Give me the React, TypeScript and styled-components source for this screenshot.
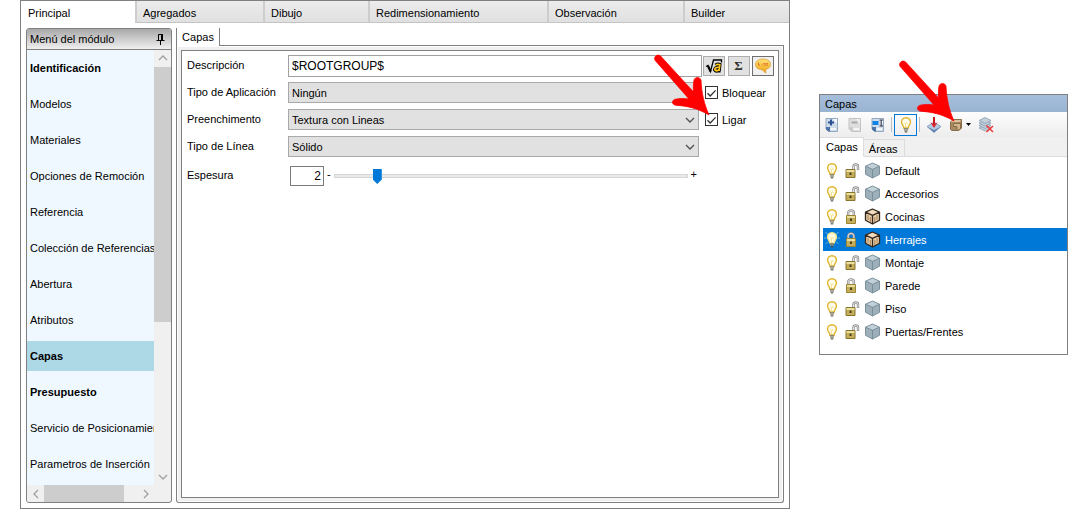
import React, { useState } from "react";
import styled, { createGlobalStyle, css } from "styled-components";

const GlobalStyle = createGlobalStyle`
  * { box-sizing: border-box; }
  body {
    margin: 0;
    background: #fff;
    color: #000;
    font: 11px/14px "Liberation Sans", Arial, sans-serif;
  }
  button, input, select { font: inherit; color: inherit; margin: 0; }
  button { padding: 0; border: 0; background: none; }
  svg { display: block; }
`;

const LINE = "#808080";

const Page = styled.div`
  display: flex;
  align-items: flex-start;
  gap: 29px;
  padding: 0 20px;
`;

/* ---------- module window ---------- */

const ModuleWindow = styled.main`
  flex: 1;
  min-width: 0;
  border: 1px solid ${LINE};
`;

const TopTabs = styled.div`
  display: flex;
`;

const TopTab = styled.button<{ $grow: number; $active?: boolean }>`
  flex: ${(p) => p.$grow} 0 0;
  height: 22px;
  padding: 2px 7px 0;
  text-align: left;
  border-bottom: 1px solid #c4c4c4;
  background: linear-gradient(#ececec, #e0e0e0);
  & + & { border-left: 2px solid #cdcdcd; padding: 2px 6px 0; }
  ${(p) => p.$active && css`
    background: #fff;
    border-bottom-color: #fff;
  `}
`;

const WindowBody = styled.div`
  display: flex;
  align-items: stretch;
  gap: 4px;
  padding: 5px;
`;

const SideMenu = styled.nav`
  display: flex;
  flex-direction: column;
  width: 146px;
  flex: none;
  border: 1px solid ${LINE};
  border-radius: 3px;
  background: #f0f0f0;
  overflow: hidden;
`;

const SideHeader = styled.div`
  display: flex;
  align-items: center;
  justify-content: space-between;
  height: 21px;
  padding: 0 5px 0 3px;
  border-bottom: 1px solid ${LINE};
  background: linear-gradient(#a8a8a8, #f0f0f0);
`;

const SideContent = styled.div`
  display: grid;
  grid-template-columns: minmax(0, 1fr) 17px;
  grid-template-rows: auto 17px;
`;

const MenuList = styled.ul`
  margin: 0;
  padding: 0;
  list-style: none;
  overflow: hidden;
  background: #f0f8ff;
`;

const MenuLink = styled.a<{ $bold?: boolean; $active?: boolean }>`
  display: block;
  margin: 3px 0 6px;
  padding: 8px 3px;
  color: #000;
  text-decoration: none;
  white-space: nowrap;
  font-weight: ${(p) => (p.$bold ? 700 : 400)};
  background: ${(p) => (p.$active ? "#add8e6" : "transparent")};
`;

const MenuItem = styled.li`
  display: flow-root;
  & + & > a { margin-top: 0; }
`;

const ScrollBar = styled.div<{ $horizontal?: boolean }>`
  display: flex;
  flex-direction: ${(p) => (p.$horizontal ? "row" : "column")};
  background: #f0f0f0;
`;

const ScrollButton = styled.button`
  display: grid;
  place-items: center;
  flex: none;
  width: 17px;
  height: 17px;
`;

const ScrollThumb = styled.div<{ $grow: number }>`
  flex: ${(p) => p.$grow} 0 0;
  background: #cdcdcd;
`;

const ScrollRest = styled.div<{ $grow: number }>`
  flex: ${(p) => p.$grow} 0 0;
`;

const Content = styled.section`
  display: flex;
  flex-direction: column;
  flex: 1;
  min-width: 0;
`;

const PageTabs = styled.div`
  display: flex;
  height: 18px;
`;

const PageTab = styled.button`
  width: 44px;
  border-left: 1px solid ${LINE};
  border-right: 1px solid ${LINE};
  background: #fff;
`;

const PageTabLine = styled.div`
  flex: 1;
  border-bottom: 1px solid ${LINE};
`;

const Frame = styled.div`
  flex: 1;
  display: flex;
  padding: 1px;
  border: 1px solid ${LINE};
  border-top: 0;
  border-radius: 0 0 3px 3px;
`;

const Panel = styled.form`
  flex: 1;
  min-width: 0;
  padding: 1px 4px 0 5px;
  background: #fff;
  border: 1px solid ${LINE};
  outline: 3px solid #f0f0f0;
  margin: 3px;
`;

const Field = styled.div`
  display: grid;
  grid-template-columns: 101px minmax(0, 1fr) 72px;
  align-items: center;
  height: 27px;
`;

const SliderField = styled(Field)`
  height: 32px;
`;

const FieldLabel = styled.label`
  padding-bottom: 2px;
  white-space: nowrap;
`;

const TextBox = styled.input`
  width: 100%;
  height: 22px;
  padding: 0 3px;
  border: 1px solid #a0a0a0;
  background: #fff;
  font-size: 12px;
`;

const SelectWrap = styled.div`
  position: relative;
  margin-right: 3px;
  svg { position: absolute; right: 4px; top: 6px; pointer-events: none; }
`;

const Select = styled.select`
  display: block;
  appearance: none;
  width: 100%;
  height: 21px;
  padding: 0 20px 0 3px;
  border: 1px solid #a9a9a9;
  border-radius: 0;
  background: #e1e1e1;
`;

const Tools = styled.div`
  display: flex;
  justify-content: space-between;
  padding-left: 1px;
`;

const ToolButton = styled.button<{ $light?: boolean }>`
  display: grid;
  place-items: center;
  width: 22px;
  height: 20px;
  border: 1px solid ${(p) => (p.$light ? "#6e6e6e" : "#adadad")};
  background: ${(p) => (p.$light ? "#f0f0f0" : "#e1e1e1")};
  color: #333;
  font: bold 13px/18px "Liberation Serif", serif;
`;

const Check = styled.label`
  position: relative;
  display: flex;
  align-items: center;
  gap: 4px;
  padding-left: 3px;
`;

const CheckInput = styled.input`
  appearance: none;
  flex: none;
  width: 13px;
  height: 13px;
  border: 1px solid #333;
  background: #fff;
  & + svg { position: absolute; left: 4px; top: 2px; visibility: hidden; pointer-events: none; }
  &:checked + svg { visibility: visible; }
`;

const SliderRow = styled.div`
  display: flex;
  align-items: center;
  gap: 3px;
  padding: 0 5px 0 2px;
`;

const Sign = styled.span`
  padding-bottom: 4px;
`;

const NumberBox = styled.input`
  flex: none;
  width: 34px;
  height: 20px;
  padding: 0 2px;
  border: 1px solid #7a7a7a;
  text-align: right;
  font-size: 12px;
`;

const Range = styled.input`
  appearance: none;
  flex: 1;
  min-width: 0;
  height: 16px;
  margin: 0;
  background: transparent;
  &::-webkit-slider-runnable-track {
    height: 4px;
    border: 1px solid #d6d6d6;
    background: #e7eaea;
  }
  &::-webkit-slider-thumb {
    appearance: none;
    width: 9px;
    height: 15px;
    margin-top: -6px;
    background: #0078d7;
    clip-path: polygon(0 0, 100% 0, 100% 70%, 50% 100%, 0 70%);
  }
`;

/* ---------- layers window ---------- */

const LayersWindow = styled.aside`
  width: 249px;
  flex: none;
  margin-top: 94px;
  padding-bottom: 11px;
  border: 1px solid ${LINE};
  background: #fff;
`;

const Caption = styled.h2`
  margin: 0;
  padding: 2px 5px 1px;
  font: inherit;
  background: linear-gradient(#a6bedb, #99b4d1);
`;

const ToolStrip = styled.div`
  display: flex;
  align-items: center;
  height: 25px;
  background: linear-gradient(#fdfdfd, #ededed);
`;

const StripButton = styled.button<{ $pressed?: boolean; $wide?: boolean }>`
  position: relative;
  display: flex;
  align-items: center;
  justify-content: center;
  gap: 3px;
  width: ${(p) => (p.$wide ? 29 : 23)}px;
  height: 22px;
  border: 1px solid ${(p) => (p.$pressed ? "#0078d7" : "transparent")};
`;

const Divider = styled.span`
  width: 1px;
  height: 15px;
  margin: 0 2px;
  background: #bdbdbd;
`;

const LayerTabs = styled.div`
  display: flex;
  align-items: flex-end;
  height: 20px;
  background: #f0f0f0;
  box-shadow: inset 0 -1px #dcdcdc;
`;

const LayerTab = styled.button<{ $active?: boolean }>`
  height: ${(p) => (p.$active ? 20 : 18)}px;
  padding: ${(p) => (p.$active ? "0 5px 1px 6px" : "1px 6px 0 5px")};
  border: 1px solid #dcdcdc;
  border-left: 0;
  background: ${(p) => (p.$active ? "#fff" : "#f0f0f0")};
  border-bottom-color: ${(p) => (p.$active ? "#fff" : "#dcdcdc")};
`;

const LayerList = styled.ul`
  margin: 0;
  padding: 2px 0 0 3px;
  list-style: none;
`;

const LayerRow = styled.li<{ $selected?: boolean }>`
  display: flex;
  align-items: center;
  gap: 4px;
  height: 23px;
  padding-left: 1px;
  color: ${(p) => (p.$selected ? "#fff" : "#000")};
  background: ${(p) => (p.$selected ? "#0078d7" : "#fff")};
`;

const PointerMark = styled.svg<{ $left: number; $top: number }>`
  position: absolute;
  left: ${(p) => p.$left}px;
  top: ${(p) => p.$top}px;
  z-index: 2;
  overflow: visible;
  pointer-events: none;
`;

/* ---------- drawings ---------- */

const RedArrow = ({ left, top }: { left: number; top: number }) => (
  <PointerMark $left={left} $top={top} width="70" height="72" viewBox="0 0 70 72" aria-hidden="true">
    <path
      d="M5.2 10.5C3 7 7.4 3.400 10.6 6L43.500 42C43.300 38 43.200 34.500 44 30.200C45 26.400 50.200 26.700 51 30.200C51.500 43 54.300 54.500 59 65C48.500 58.600 37.500 56 25.600 55.200C21.400 54.300 21.600 50 25.400 49.200C30 48.200 34.500 48.200 39 49Z"
      fill="#f00"
      stroke="#f00"
      strokeWidth=".8"
      strokeLinejoin="round"
    />
  </PointerMark>
);

const chevrons = {
  up: "M1 6L5 2L9 6",
  down: "M1 3L5 7L9 3",
  left: "M7 1L3 5L7 9",
  right: "M3 1L7 5L3 9",
};

const Chevron = ({ to, color = "#a0a0a0" }: { to: keyof typeof chevrons; color?: string }) => (
  <svg width="10" height="10" viewBox="0 0 10 10" aria-hidden="true">
    <path d={chevrons[to]} fill="none" stroke={color} strokeWidth="1.3" />
  </svg>
);

const Tick = () => (
  <svg width="11" height="11" viewBox="0 0 11 11" aria-hidden="true">
    <path d="M1.5 5.2L4.2 8L9.6 2.4" fill="none" stroke="#333" strokeWidth="1.3" />
  </svg>
);

const Pin = () => (
  <svg width="11" height="12" viewBox="0 0 11 12" aria-hidden="true">
    <path d="M3.5 7.5V1.5H7.5V7.5M1.5 7.5H9.5M5.5 8V12" fill="none" stroke="#000" />
    <path d="M6 1H8V7H6Z" />
  </svg>
);

const RootIcon = () => (
  <svg width="18" height="16" viewBox="0 0 18 16" aria-hidden="true">
    <path d="M1 8.5L3 7.5L5.5 13.5L8.5 2H16.5V4.5" fill="none" stroke="#000" strokeWidth="1.3" />
    <path d="M3 8L5.6 13.5" stroke="#000" strokeWidth="2.2" />
    <path d="M10.5 7.2Q12.5 5.5 15 6.5L14.3 13H15.5M14.2 9Q9.5 8.8 9.5 12Q11.5 14.8 14 11.5" fill="none" stroke="#000" strokeWidth="3" />
    <path d="M10.8 7.2Q12.5 5.8 14.8 6.8L14 13M14.2 9.3Q9.9 9 9.8 11.8Q11.5 14 14 11.5" fill="none" stroke="#ffc61a" strokeWidth="1.7" />
  </svg>
);

const Balloon = () => (
  <svg width="18" height="16" viewBox="0 0 18 16" aria-hidden="true">
    <defs>
      <linearGradient id="balloon" x1="0" y1="0" x2="0" y2="1">
        <stop offset="0" stopColor="#ffe27a" />
        <stop offset="1" stopColor="#f0a010" />
      </linearGradient>
    </defs>
    <path d="M9 1C4 1 1.5 3.3 1.5 6.5C1.5 9.8 4 11.5 8 11.7C9 12.5 10 14 12 15C11.5 13.5 11.5 12.5 12 11.3C15 10.5 16.5 8.8 16.5 6.5C16.5 3.3 14 1 9 1Z" fill="url(#balloon)" stroke="#d79a2b" strokeWidth=".7" />
    <path d="M4.5 4.500V7H6M7.5 7H8.500M9.500 5.500H11.500M12.300 5.500H14M9.500 7H14" stroke="#d8601c" strokeWidth=".8" fill="none" />
  </svg>
);

const Bulb = ({ glow }: { glow?: boolean }) => (
  <svg width="16" height="16" viewBox="0 0 16 16" aria-hidden="true">
    {glow && (
      <path d="M0 6H2.500M13.500 6H16M1.500 0L4 2.500M14.500 0L12 2.500M1.500 12L4 9.500M14.500 12L12 9.500" stroke="#6fb8d8" strokeWidth="1" />
    )}
    <path d="M8 .8C5.2 .8 3.6 2.8 3.6 5.2C3.6 7.6 5.7 8.6 5.9 11H10.1C10.3 8.6 12.4 7.6 12.4 5.2C12.4 2.8 10.8 .8 8 .8Z" fill={glow ? "#fffbe0" : "#fffdf0"} stroke={glow ? "#f5e68b" : "#dfb52c"} strokeWidth="1.4" />
    <path d="M6.5 5.500L7.5 7L8.500 5.500L9.500 7M7.500 7V10.500" fill="none" stroke="#f3dc79" strokeWidth=".8" />
    <path d="M5.800 11.600H10.200M6 13.200H10" stroke="#8e8a76" strokeWidth="1.2" />
    <path d="M6.700 14.300H9.300V15.400H6.700Z" fill="#4a4a42" />
  </svg>
);

const Padlock = ({ open }: { open?: boolean }) => (
  <svg width="16" height="16" viewBox="0 0 16 16" aria-hidden="true">
    {open ? (
      <>
        <path d="M9.500 6.500V3.500Q9.500 1.500 11.700 1.500Q14 1.500 14 3.500V7" fill="none" stroke="#8b8b8b" strokeWidth="2.4" />
        <path d="M9.500 6.500V3.500Q9.500 1.500 11.700 1.500Q14 1.500 14 3.500V6.500" fill="none" stroke="#eee" strokeWidth=".9" />
        <path d="M2 6.500H11V14.500H2Z" fill="#c4ae5c" stroke="#87742e" />
        <path d="M2.500 7H10.500V9H2.500Z" fill="#ebdf9e" />
        <path d="M5.500 9.500H7.500V12H5.500Z" fill="#4a401c" />
      </>
    ) : (
      <>
        <path d="M4.200 7V3.800Q4.200 1.500 7 1.500Q9.800 1.500 9.800 3.800V7" fill="none" stroke="#8b8b8b" strokeWidth="2.4" />
        <path d="M4.200 7V3.800Q4.200 1.500 7 1.500Q9.800 1.500 9.800 3.800V7" fill="none" stroke="#eee" strokeWidth=".9" />
        <path d="M2.500 6.500H11.500V14.500H2.500Z" fill="#c4ae5c" stroke="#9b8534" />
        <path d="M3 7H11V9H3Z" fill="#ebdf9e" />
        <path d="M6 9.500H8V12H6Z" fill="#4a401c" />
      </>
    )}
  </svg>
);

const Cube = ({ wood }: { wood?: boolean }) => (
  <svg width="17" height="17" viewBox="0 0 17 17" aria-hidden="true">
    <path d="M8.5 1L15.5 4.2V12.3L8.5 16L1.5 12.3V4.2Z" fill={wood ? "#ecd0a9" : "#9db0ba"} />
    <path d="M8.5 1L15.5 4.2L8.5 7.3L1.5 4.2Z" fill={wood ? "#f2dcc0" : "#c2d0d7"} />
    {wood && <path d="M4 7V12M6.300 9V14M10.800 9V14M13 7V12" stroke="#8c6844" strokeWidth=".8" />}
    <path d="M8.5 1L15.5 4.2V12.3L8.5 16L1.5 12.3V4.2ZM1.5 4.2L8.5 7.3L15.5 4.2M8.5 7.3V16" fill="none" stroke={wood ? "#33261c" : "#748a96"} strokeWidth={wood ? 1.3 : 0.9} strokeLinejoin="round" />
  </svg>
);

const Sheet = ({ kind }: { kind: "add" | "remove" | "rename" }) => {
  const off = kind === "remove";
  return (
    <svg width="14" height="14" viewBox="0 0 14 14" aria-hidden="true">
      <path d="M1 .5H12.500V13.500H3.500L1 11Z" fill={off ? "#dedede" : "#cfddeb"} stroke={off ? "#c3c3c3" : "#95a9c2"} />
      <path d="M8 1H12V6Z" fill={off ? "#efefef" : "#f4f9ff"} />
      <path d="M1 9H5V13.500H3.500L1 11.500Z" fill={off ? "#ccc" : "#4e74a8"} />
      <path d="M5.500 11H11" stroke="#fff" strokeWidth="1.5" />
      {kind === "add" && <path d="M3 4.500H9M6 1.500V7.500" stroke="#2c5292" strokeWidth="2" />}
      {kind === "remove" && <path d="M3.500 4.500H9.500" stroke="#a9a9a9" strokeWidth="2" />}
      {kind === "rename" && (
        <>
          <path d="M1.500 3H7.500V7H1.500Z" fill="#1283e6" />
          <path d="M8.500 2H12M8.500 8H12M10.200 2V8" stroke="#334" fill="none" />
        </>
      )}
    </svg>
  );
};

const InsertLayer = () => (
  <svg width="16" height="16" viewBox="0 0 16 16" aria-hidden="true">
    <path d="M8 5L15 9.5L8 15.5L1 9.5Z" fill="#b4c9e0" stroke="#7d97b8" strokeWidth=".7" />
    <path d="M1 9.5L8 13L15 9.5L8 15.5Z" fill="#6384ad" />
    <path d="M8 0V7" stroke="#c8141c" strokeWidth="2" />
    <path d="M4.5 5.500L8 7L11.500 5.500L8 11Z" fill="#d8262e" />
  </svg>
);

const Box = () => (
  <svg width="14" height="14" viewBox="0 0 14 14" aria-hidden="true">
    <path d="M1.500 4L4 1.500H12.500V10L10 12.500H3L1.500 11.500Z" fill="#a98a62" stroke="#8a6f4a" />
    <path d="M2 4L4.300 2H12L10.500 4Z" fill="#dcc4a0" />
    <path d="M4.500 5.500H11.500V10.500L9 12.500L8 12V8.500H4.500Z" fill="#d3b78f" stroke="#7b5f3c" strokeWidth=".8" />
  </svg>
);

const Caret = () => (
  <svg width="5" height="3" viewBox="0 0 5 3" aria-hidden="true">
    <path d="M0 0H5L2.5 3Z" />
  </svg>
);

const RemoveLayers = () => (
  <svg width="16" height="16" viewBox="0 0 16 16" aria-hidden="true">
    {[10, 7.5, 5, 2.5].map((y) => (
      <path key={y} d={`M7 ${y - 2}L13 ${y + 1}L7 ${y + 4}L1 ${y + 1}Z`} fill="#c3d0dc" stroke="#7c93a8" strokeWidth=".7" />
    ))}
    <path d="M8.500 8.500L15 15M15 9L8.500 15" stroke="#f03a3a" strokeWidth="1.6" />
  </svg>
);

/* ---------- data ---------- */

const topTabs = [
  { name: "Principal", grow: 100 },
  { name: "Agregados", grow: 114 },
  { name: "Dibujo", grow: 91 },
  { name: "Redimensionamiento", grow: 165 },
  { name: "Observación", grow: 122 },
  { name: "Builder", grow: 92 },
];

const menu = [
  { name: "Identificación", bold: true },
  { name: "Modelos" },
  { name: "Materiales" },
  { name: "Opciones de Remoción" },
  { name: "Referencia" },
  { name: "Colección de Referencias" },
  { name: "Abertura" },
  { name: "Atributos" },
  { name: "Capas", bold: true, active: true },
  { name: "Presupuesto", bold: true },
  { name: "Servicio de Posicionamiento" },
  { name: "Parametros de Inserción" },
];

const layers = [
  { name: "Default", locked: false, wood: false },
  { name: "Accesorios", locked: false, wood: false },
  { name: "Cocinas", locked: true, wood: true },
  { name: "Herrajes", locked: true, wood: true },
  { name: "Montaje", locked: false, wood: false },
  { name: "Parede", locked: true, wood: false },
  { name: "Piso", locked: false, wood: false },
  { name: "Puertas/Frentes", locked: false, wood: false },
];

const Dropdown = ({ id, value }: { id: string; value: string }) => (
  <SelectWrap>
    <Select id={id} defaultValue={value}>
      <option>{value}</option>
    </Select>
    <Chevron to="down" color="#505050" />
  </SelectWrap>
);

export default function App() {
  const [thickness, setThickness] = useState(2);
  const [selected, setSelected] = useState("Herrajes");
  const changeThickness = (e: React.ChangeEvent<HTMLInputElement>) => setThickness(Number(e.target.value) || 1);

  return (
    <Page>
      <GlobalStyle />
      <ModuleWindow>
        <TopTabs role="tablist">
          {topTabs.map((t, i) => (
            <TopTab key={t.name} type="button" role="tab" aria-selected={i === 0} $grow={t.grow} $active={i === 0}>
              {t.name}
            </TopTab>
          ))}
        </TopTabs>
        <WindowBody>
          <SideMenu>
            <SideHeader>
              Menú del módulo
              <button type="button" aria-label="Fijar"><Pin /></button>
            </SideHeader>
            <SideContent>
              <MenuList>
                {menu.map((m) => (
                  <MenuItem key={m.name}>
                    <MenuLink href="#" $bold={m.bold} $active={m.active}>{m.name}</MenuLink>
                  </MenuItem>
                ))}
              </MenuList>
              <ScrollBar>
                <ScrollButton type="button" aria-label="Subir"><Chevron to="up" /></ScrollButton>
                <ScrollThumb $grow={255} />
                <ScrollRest $grow={146} />
                <ScrollButton type="button" aria-label="Bajar"><Chevron to="down" /></ScrollButton>
              </ScrollBar>
              <ScrollBar $horizontal>
                <ScrollButton type="button" aria-label="Izquierda"><Chevron to="left" /></ScrollButton>
                <ScrollThumb $grow={80} />
                <ScrollRest $grow={13} />
                <ScrollButton type="button" aria-label="Derecha"><Chevron to="right" /></ScrollButton>
              </ScrollBar>
            </SideContent>
          </SideMenu>
          <Content>
            <PageTabs role="tablist">
              <PageTab type="button" role="tab" aria-selected>Capas</PageTab>
              <PageTabLine />
            </PageTabs>
            <Frame>
              <Panel onSubmit={(e) => e.preventDefault()}>
                <Field>
                  <FieldLabel htmlFor="description">Descripción</FieldLabel>
                  <TextBox id="description" defaultValue="$ROOTGROUP$" />
                  <Tools>
                    <ToolButton type="button" aria-label="Fórmula"><RootIcon /></ToolButton>
                    <ToolButton type="button">Σ</ToolButton>
                    <ToolButton type="button" $light aria-label="Comentario"><Balloon /></ToolButton>
                  </Tools>
                </Field>
                <Field>
                  <FieldLabel htmlFor="application">Tipo de Aplicación</FieldLabel>
                  <Dropdown id="application" value="Ningún" />
                  <Check>
                    <CheckInput type="checkbox" defaultChecked />
                    <Tick />
                    Bloquear
                  </Check>
                </Field>
                <Field>
                  <FieldLabel htmlFor="fill">Preenchimento</FieldLabel>
                  <Dropdown id="fill" value="Textura con Lineas" />
                  <Check>
                    <CheckInput type="checkbox" defaultChecked />
                    <Tick />
                    Ligar
                    <RedArrow left={-52} top={-63} />
                  </Check>
                </Field>
                <Field>
                  <FieldLabel htmlFor="line">Tipo de Línea</FieldLabel>
                  <Dropdown id="line" value="Sólido" />
                </Field>
                <SliderField>
                  <FieldLabel htmlFor="thickness">Espesura</FieldLabel>
                  <SliderRow>
                    <NumberBox id="thickness" value={thickness} onChange={changeThickness} />
                    <Sign>-</Sign>
                    <Range type="range" aria-label="Espesura" min={1} max={10} value={thickness} onChange={changeThickness} />
                    <Sign>+</Sign>
                  </SliderRow>
                </SliderField>
              </Panel>
            </Frame>
          </Content>
        </WindowBody>
      </ModuleWindow>

      <LayersWindow>
        <Caption>Capas</Caption>
        <ToolStrip role="toolbar">
          <StripButton type="button" aria-label="Agregar capa"><Sheet kind="add" /></StripButton>
          <StripButton type="button" aria-label="Quitar capa" disabled><Sheet kind="remove" /></StripButton>
          <StripButton type="button" aria-label="Renombrar capa"><Sheet kind="rename" /></StripButton>
          <Divider />
          <StripButton type="button" aria-label="Visibilidad" $pressed><Bulb /></StripButton>
          <Divider />
          <StripButton type="button" aria-label="Mover a capa"><InsertLayer /></StripButton>
          <StripButton type="button" aria-label="Aspecto" $wide>
            <Box />
            <Caret />
            <RedArrow left={-51} top={-59} />
          </StripButton>
          <StripButton type="button" aria-label="Limpiar capas"><RemoveLayers /></StripButton>
        </ToolStrip>
        <LayerTabs role="tablist">
          <LayerTab type="button" role="tab" aria-selected $active>Capas</LayerTab>
          <LayerTab type="button" role="tab" aria-selected={false}>Áreas</LayerTab>
        </LayerTabs>
        <LayerList>
          {layers.map((l) => (
            <LayerRow key={l.name} $selected={l.name === selected} onClick={() => setSelected(l.name)}>
              <button type="button" aria-label="Visible"><Bulb glow={l.name === selected} /></button>
              <button type="button" aria-label="Bloqueo"><Padlock open={!l.locked} /></button>
              <Cube wood={l.wood} />
              <span>{l.name}</span>
            </LayerRow>
          ))}
        </LayerList>
      </LayersWindow>
    </Page>
  );
}
